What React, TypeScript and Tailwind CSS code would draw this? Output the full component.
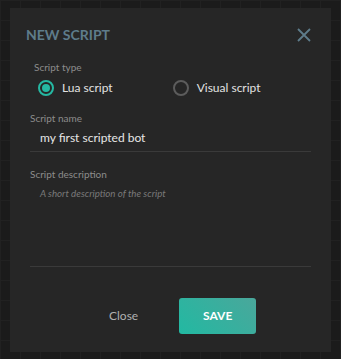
const Radio = ({ checked, label }: { checked: boolean; label: string }) => (
  <label className="flex items-center gap-[8px]">
    {checked ? (
      <span className="w-4 h-4 rounded-full border-2 border-[#25b8a2] flex items-center justify-center">
        <span className="w-[8px] h-[8px] rounded-full bg-[#25b8a2]" />
      </span>
    ) : (
      <span className="w-4 h-4 rounded-full border-2 border-[#5c5c5c]" />
    )}
    <span className="text-[12px] text-[#e2e2e2] leading-none">{label}</span>
  </label>
)

const App = () => {
  return (
    <div
      className="w-[341px] h-[359px] bg-[#1b1b1b] pt-2 px-[10px] overflow-hidden"
      style={{
        fontFamily: 'Lato, "Open Sans", sans-serif',
        backgroundImage:
          'linear-gradient(#212121 1px, transparent 1px), linear-gradient(90deg, #212121 1px, transparent 1px)',
        backgroundSize: '20px 20px',
      }}
    >
      <div className="bg-[#262626] h-[344px] flex flex-col px-[20px]">
        <div className="flex items-center justify-between pt-[20px] ml-[-4px]">
          <h2 className="text-[14px] font-bold text-[#5e7c8b] leading-none">NEW SCRIPT</h2>
          <svg width="14" height="14" viewBox="0 0 14 14" className="text-[#5e7c8b]">
            <path d="M1 1 L13 13 M13 1 L1 13" stroke="currentColor" strokeWidth="1.8" fill="none" />
          </svg>
        </div>

        <div className="pt-[20px] pl-[4px]">
          <div className="text-[10px] text-[#8c8c8c] leading-none">Script type</div>
          <div className="flex gap-[60px] mt-[8px] pl-[4px]">
            <Radio checked label="Lua script" />
            <Radio checked={false} label="Visual script" />
          </div>
        </div>

        <div className="pt-[17px]">
          <div className="text-[10px] text-[#8c8c8c] leading-none">Script name</div>
          <div className="text-[12px] text-[#e6e6e6] pl-[10px] mt-[9px] leading-none">
            my first scripted bot
          </div>
          <div className="h-px bg-[#3a3a3a] mt-[7px]" />
        </div>

        <div className="pt-[17px]">
          <div className="text-[10px] text-[#8c8c8c] leading-none">Script description</div>
          <div className="text-[9.7px] italic text-[#7a7a7a] pl-[10px] mt-[10px] leading-none">
            A short description of the script
          </div>
          <div className="h-px bg-[#3a3a3a] mt-[67px]" />
        </div>

        <div className="flex items-center pt-[31px]">
          <button className="ml-[79px] text-[12px] text-[#b0b0b0]">Close</button>
          <button
            className="ml-[41px] w-[77px] h-[36px] rounded-[3px] text-white text-[12px] font-bold"
            style={{ background: 'linear-gradient(225deg, #4aa79b, #22b9a2)' }}
          >
            SAVE
          </button>
        </div>
      </div>
    </div>
  )
}

export default App
